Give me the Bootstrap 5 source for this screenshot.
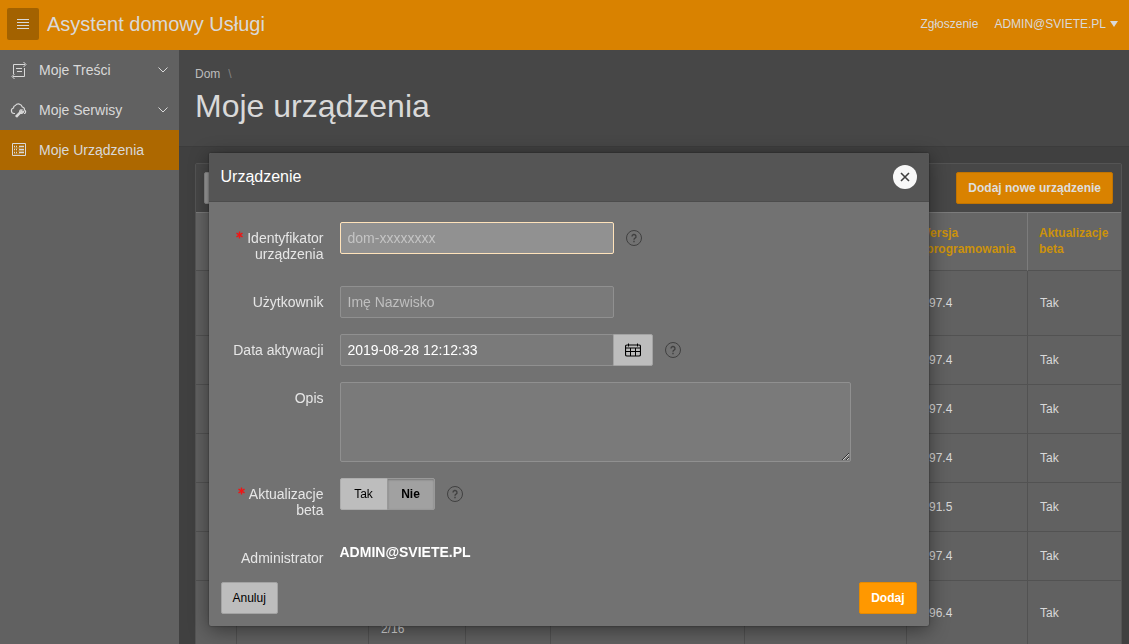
<!DOCTYPE html>
<html lang="pl">
<head>
<meta charset="utf-8">
<meta name="viewport" content="width=device-width, initial-scale=1">
<title>Moje urządzenia</title>
<link rel="stylesheet" href="https://cdn.jsdelivr.net/npm/bootstrap@5.3.0/dist/css/bootstrap.min.css">
<style>
  body { font-family: "Liberation Sans", Arial, sans-serif; font-size: 12px; line-height: 16px; color: #d9d9d9; background: #404040; height: 100vh; overflow: hidden; }
  a { color: inherit; text-decoration: none; }
  svg { display: block; fill: none; stroke: currentColor; flex: none; }

  .topbar { background: #d98200; height: 50px; padding: 0 11px 2px 7px; }
  .btn { --bs-btn-font-size: 12px; --bs-btn-line-height: 16px; --bs-btn-padding-x: 11px; --bs-btn-padding-y: 7px; --bs-btn-border-radius: 2px; }
  .btn-menu { background: #a36200; color: #d9d9d9; width: 32px; height: 32px; padding: 0; border: 0; }
  .brand { font-size: 20px; line-height: 24px; }

  .layout { height: calc(100vh - 50px); }
  .sidebar { width: 179px; background: #616161; }
  .sidebar a { height: 40px; padding: 0 11px 0 10px; font-size: 14px; gap: 11px; }
  .sidebar a.active { background: #ad6800; }
  .content { min-width: 0; overflow: hidden; }
  .titlebar { background: #474747; border-bottom: 1px solid #3c3c3c; padding: 16px 16px 17px; height: 97px; }
  .titlebar h1 { font-size: 32px; line-height: 40px; margin: 4px 0 0; font-weight: 400; }
  .crumbs { color: #bdbdbd; }

  .report { margin: 16px 7px 0 16px; border: 1px solid #545454; border-radius: 2px; }
  .report-tools { background: #474747; padding: 8px; }
  .btn-search { background: #a1a1a1; border-color: #8a8a8a; width: 48px; color: #222; }
  .btn-new { background: #d98200; border-color: #c27400; color: #dedede; font-weight: 700; }
  .report-table { width: 100%; table-layout: fixed; border-collapse: separate; border-spacing: 0; }
  .report-table th { background: #666; color: #cc920b; border-top: 1px solid #7c7c7c; border-bottom: 1px solid #525252; border-right: 1px solid #7c7c7c; padding: 12px 12px 13px; }
  .report-table td { background: #616161; border-bottom: 1px solid #525252; border-right: 1px solid #525252; padding: 8px 12px; height: 49px; }
  .report-table th:last-child, .report-table td:last-child { border-right: 0; }
  .report-table th:last-child { padding-left: 11px; }

  .modal { padding-left: 8px; --bs-modal-width: 720px; }
  .modal-dialog { margin-top: 153px; margin-bottom: 0; }
  .modal-content { background: #727272; color: #e6e6e6; border: 0; border-radius: 2px; box-shadow: 0 4px 20px rgba(0,0,0,.45), 0 0 2px rgba(0,0,0,.5); font-size: 14px; }
  .modal-header { background: #555; border-bottom: 1px solid #4c4c4c; border-radius: 2px 2px 0 0; padding: 12px; height: 49px; }
  .modal-title { font-size: 16px; line-height: 24px; font-weight: 400; color: #fff; }
  .btn-x { width: 24px; height: 24px; padding: 0; border: 0; border-radius: 50%; background: #f8f8f8; color: #404040; }
  .modal-body { padding: 20px 12px 8px; }
  .modal-footer { border: 0; padding: 0 12px 12px; }
  .modal-footer > * { margin: 0; }
  .field { display: grid; grid-template-columns: 103px minmax(0, 1fr); column-gap: 16px; margin-bottom: 16px; }
  .field-label { padding: 8px 0 0; text-align: right; }
  .two-line { padding-bottom: 8px; }
  .req { display: inline-block; width: 7px; height: 8px; margin-right: 4px; color: #f01414; vertical-align: 4px; }
  .form-control, .form-control:focus { font-size: 14px; line-height: 16px; padding: 7px; height: 32px; width: 274px; border: 1px solid #909090; border-radius: 2px; background: #7a7a7a; color: #fff; box-shadow: none; }
  .form-control::placeholder { color: #bfbfbf; opacity: 1; }
  .form-control.current { background: #919191; border-color: #ffe3bb; }
  .form-control.current::placeholder { color: #c4c4c4; }
  textarea.form-control { width: 511px; height: 80px; resize: both; }
  .btn-grey { --bs-btn-bg: #bdbdbd; --bs-btn-color: #000; --bs-btn-border-color: #a3a3a3; }
  .btn-cal { width: 40px; padding: 0; margin-left: -1px; border-radius: 0 2px 2px 0; }
  .btn-help { padding: 0; border: 0; color: #404040; margin-left: 12px; }
  .choice { width: 48px; padding: 7px 0; }
  .choice-on, .btn-check:checked + .choice-on { background: #a1a1a1; color: #000; border-color: #999; font-weight: 700; box-shadow: inset 0 1px 2px rgba(0,0,0,.25); }
  .btn-check:not(:checked) + .choice { background: #bdbdbd; color: #000; border-color: #adadad; }
  .choices .choice:last-of-type { border-radius: 0 2px 2px 0; margin-left: -1px; }
  .choices .choice:first-of-type { border-radius: 2px 0 0 2px; }
  .btn-add { --bs-btn-bg: #ff9800; --bs-btn-color: #fff; --bs-btn-border-color: #e68a00; font-weight: 700; }
  .value { color: #fff; font-weight: 700; padding-top: 2px; }
</style>
</head>
<body>
<header class="topbar d-flex align-items-center">
  <button type="button" class="btn btn-menu d-flex align-items-center justify-content-center" aria-label="Menu"><svg width="12" height="12"><path d="M0 1.5h12M0 4.5h12M0 7.5h12M0 10.5h12"/></svg></button>
  <a href="#" class="brand ms-2">Asystent domowy Usługi</a>
  <nav class="ms-auto d-flex gap-3">
    <a href="#">Zgłoszenie</a>
    <a href="#" class="d-flex align-items-center gap-1">ADMIN@SVIETE.PL<svg width="8" height="6"><path d="M0 0h8L4 6z" fill="currentColor" stroke="none"/></svg></a>
  </nav>
</header>
<div class="layout d-flex">
  <nav class="sidebar flex-shrink-0">
    <a href="#" class="d-flex align-items-center"><svg width="18" height="18"><path d="M3.500 13V3.500H15M13.500 1l2.500 2.500L13.500 6M14.500 7v8.500H3M4.500 13 2 15.500 4.500 18M6 7.500h6M7 10.500h5"/></svg><span>Moje Treści</span><svg class="ms-auto" width="10" height="6"><path d="M.5.5 5 5 9.500.5"/></svg></a>
    <a href="#" class="d-flex align-items-center"><svg width="18" height="18"><path d="M5 12.500H4a2.800 2.800 0 0 1-.5-5.500 2.500 2.500 0 0 1 1.800-2.500 4 4 0 0 1 7 1.500 2.800 2.800 0 0 1 2.200 3 1.900 1.900 0 0 1 0 3.500H14" stroke-width="1.200"/><path d="M6 15.500l3.500-3.500M12.500 8.500l-1.200 1.700 1 1 1.900-1" stroke-width="1.300"/><path d="M5 15 9 11c0-2 1-3 3-3l-1.500 2 1.500 1.500 2-1c0 2-1.500 2.500-3.500 2.500L7 16.800z" fill="currentColor" stroke="none"/></svg><span>Moje Serwisy</span><svg class="ms-auto" width="10" height="6"><path d="M.5.5 5 5 9.500.5"/></svg></a>
    <a href="#" class="active d-flex align-items-center"><svg width="18" height="18"><path d="M2.500 2.500h13v12h-13z"/><path d="M4 5.500h1M6 5.500h1M9 5.500h5M4 8.500h1M6 8.500h1M9 8.500h5M4 11.500h1M6 11.500h1M9 11.500h5" stroke-width="1.400"/><path d="M4 7h6M8 10h6M4 13h6" opacity=".35"/></svg><span>Moje Urządzenia</span></a>
  </nav>
  <main class="content flex-grow-1">
    <div class="titlebar">
      <div class="crumbs d-flex gap-2"><a href="#">Dom</a><span class="opacity-50">\</span></div>
      <h1>Moje urządzenia</h1>
    </div>
    <section class="report">
      <div class="report-tools d-flex justify-content-between">
        <button type="button" class="btn btn-search" aria-label="Szukaj"></button>
        <button type="button" class="btn btn-new">Dodaj nowe urządzenie</button>
      </div>
      <table class="report-table">
        <colgroup><col style="width:41px"><col style="width:132px"><col style="width:97px"><col style="width:85px"><col style="width:194px"><col style="width:162px"><col style="width:121px"><col></colgroup>
        <thead><tr><th></th><th></th><th></th><th></th><th></th><th></th><th>Wersja oprogramowania</th><th>Aktualizacje beta</th></tr></thead>
        <tbody>
          <tr><td style="height:65px"></td><td></td><td></td><td></td><td></td><td></td><td>0.97.4</td><td>Tak</td></tr>
          <tr><td></td><td></td><td></td><td></td><td></td><td></td><td>0.97.4</td><td>Tak</td></tr>
          <tr><td></td><td></td><td></td><td></td><td></td><td></td><td>0.97.4</td><td>Tak</td></tr>
          <tr><td></td><td></td><td></td><td></td><td></td><td></td><td>0.97.4</td><td>Tak</td></tr>
          <tr><td></td><td></td><td></td><td></td><td></td><td></td><td>0.91.5</td><td>Tak</td></tr>
          <tr><td></td><td></td><td></td><td></td><td></td><td></td><td>0.97.4</td><td>Tak</td></tr>
          <tr><td></td><td></td><td><br><br>2/16</td><td></td><td></td><td></td><td>0.96.4</td><td>Tak</td></tr>
        </tbody>
      </table>
    </section>
  </main>
</div>

<div class="modal d-block" role="dialog" aria-modal="true" aria-labelledby="dlg-title">
  <div class="modal-dialog">
    <form class="modal-content">
      <div class="modal-header">
        <h2 class="modal-title" id="dlg-title">Urządzenie</h2>
        <button type="button" class="btn btn-x d-flex align-items-center justify-content-center" aria-label="Zamknij"><svg width="10" height="10"><path d="M1 1l8 8M9 1L1 9" stroke-width="1.600"/></svg></button>
      </div>
      <div class="modal-body">
        <div class="field">
          <label class="field-label two-line" for="f-id"><svg class="req" viewBox="0 0 7 8"><path d="M3.500.5v7M.5 2.200l6 3.600M6.500 2.200l-6 3.600" stroke-width="1.400"/></svg>Identyfikator urządzenia</label>
          <div class="d-flex"><input id="f-id" class="form-control current" placeholder="dom-xxxxxxxx"><button type="button" class="btn btn-help d-flex align-self-start mt-2" aria-label="Pomoc"><svg width="16" height="16"><circle cx="8" cy="8" r="7.500"/><path d="M6 6.500a2 2 0 1 1 3 1.700q-1 .5-1 1.600M8 10.800v1.400" stroke-width="1.400"/></svg></button></div>
        </div>
        <div class="field">
          <label class="field-label" for="f-user">Użytkownik</label>
          <div><input id="f-user" class="form-control" placeholder="Imę Nazwisko"></div>
        </div>
        <div class="field">
          <label class="field-label" for="f-date">Data aktywacji</label>
          <div class="d-flex"><input id="f-date" class="form-control" value="2019-08-28 12:12:33"><button type="button" class="btn btn-grey btn-cal d-flex align-items-center justify-content-center" aria-label="Kalendarz"><svg width="16" height="14"><rect x=".5" y="2" width="15" height="11" rx="1.500" stroke-width="1.200"/><path d="M.5 5h15M.5 8.500h15M5.500 5v8M10.500 5v8M3.500.5v3M12.500.5v3"/></svg></button><button type="button" class="btn btn-help d-flex align-self-start mt-2" aria-label="Pomoc"><svg width="16" height="16"><circle cx="8" cy="8" r="7.500"/><path d="M6 6.500a2 2 0 1 1 3 1.700q-1 .5-1 1.600M8 10.800v1.400" stroke-width="1.400"/></svg></button></div>
        </div>
        <div class="field">
          <label class="field-label" for="f-desc">Opis</label>
          <div class="d-flex"><textarea id="f-desc" class="form-control"></textarea></div>
        </div>
        <div class="field">
          <div class="field-label two-line" id="beta-label"><svg class="req" viewBox="0 0 7 8"><path d="M3.500.5v7M.5 2.200l6 3.600M6.500 2.200l-6 3.600" stroke-width="1.400"/></svg>Aktualizacje beta</div>
          <div class="d-flex align-items-start choices" role="group" aria-labelledby="beta-label">
            <input type="radio" class="btn-check" name="beta" id="beta-y"><label class="btn choice" for="beta-y">Tak</label>
            <input type="radio" class="btn-check" name="beta" id="beta-n" checked><label class="btn choice choice-on" for="beta-n">Nie</label>
            <button type="button" class="btn btn-help d-flex align-self-start mt-2" aria-label="Pomoc"><svg width="16" height="16"><circle cx="8" cy="8" r="7.500"/><path d="M6 6.500a2 2 0 1 1 3 1.700q-1 .5-1 1.600M8 10.800v1.400" stroke-width="1.400"/></svg></button>
          </div>
        </div>
        <div class="field mb-2">
          <div class="field-label">Administrator</div>
          <div class="value">ADMIN@SVIETE.PL</div>
        </div>
      </div>
      <div class="modal-footer justify-content-between">
        <button type="button" class="btn btn-grey">Anuluj</button>
        <button type="submit" class="btn btn-add">Dodaj</button>
      </div>
    </form>
  </div>
</div>
<script src="https://cdn.jsdelivr.net/npm/bootstrap@5.3.0/dist/js/bootstrap.bundle.min.js"></script>
</body>
</html>
